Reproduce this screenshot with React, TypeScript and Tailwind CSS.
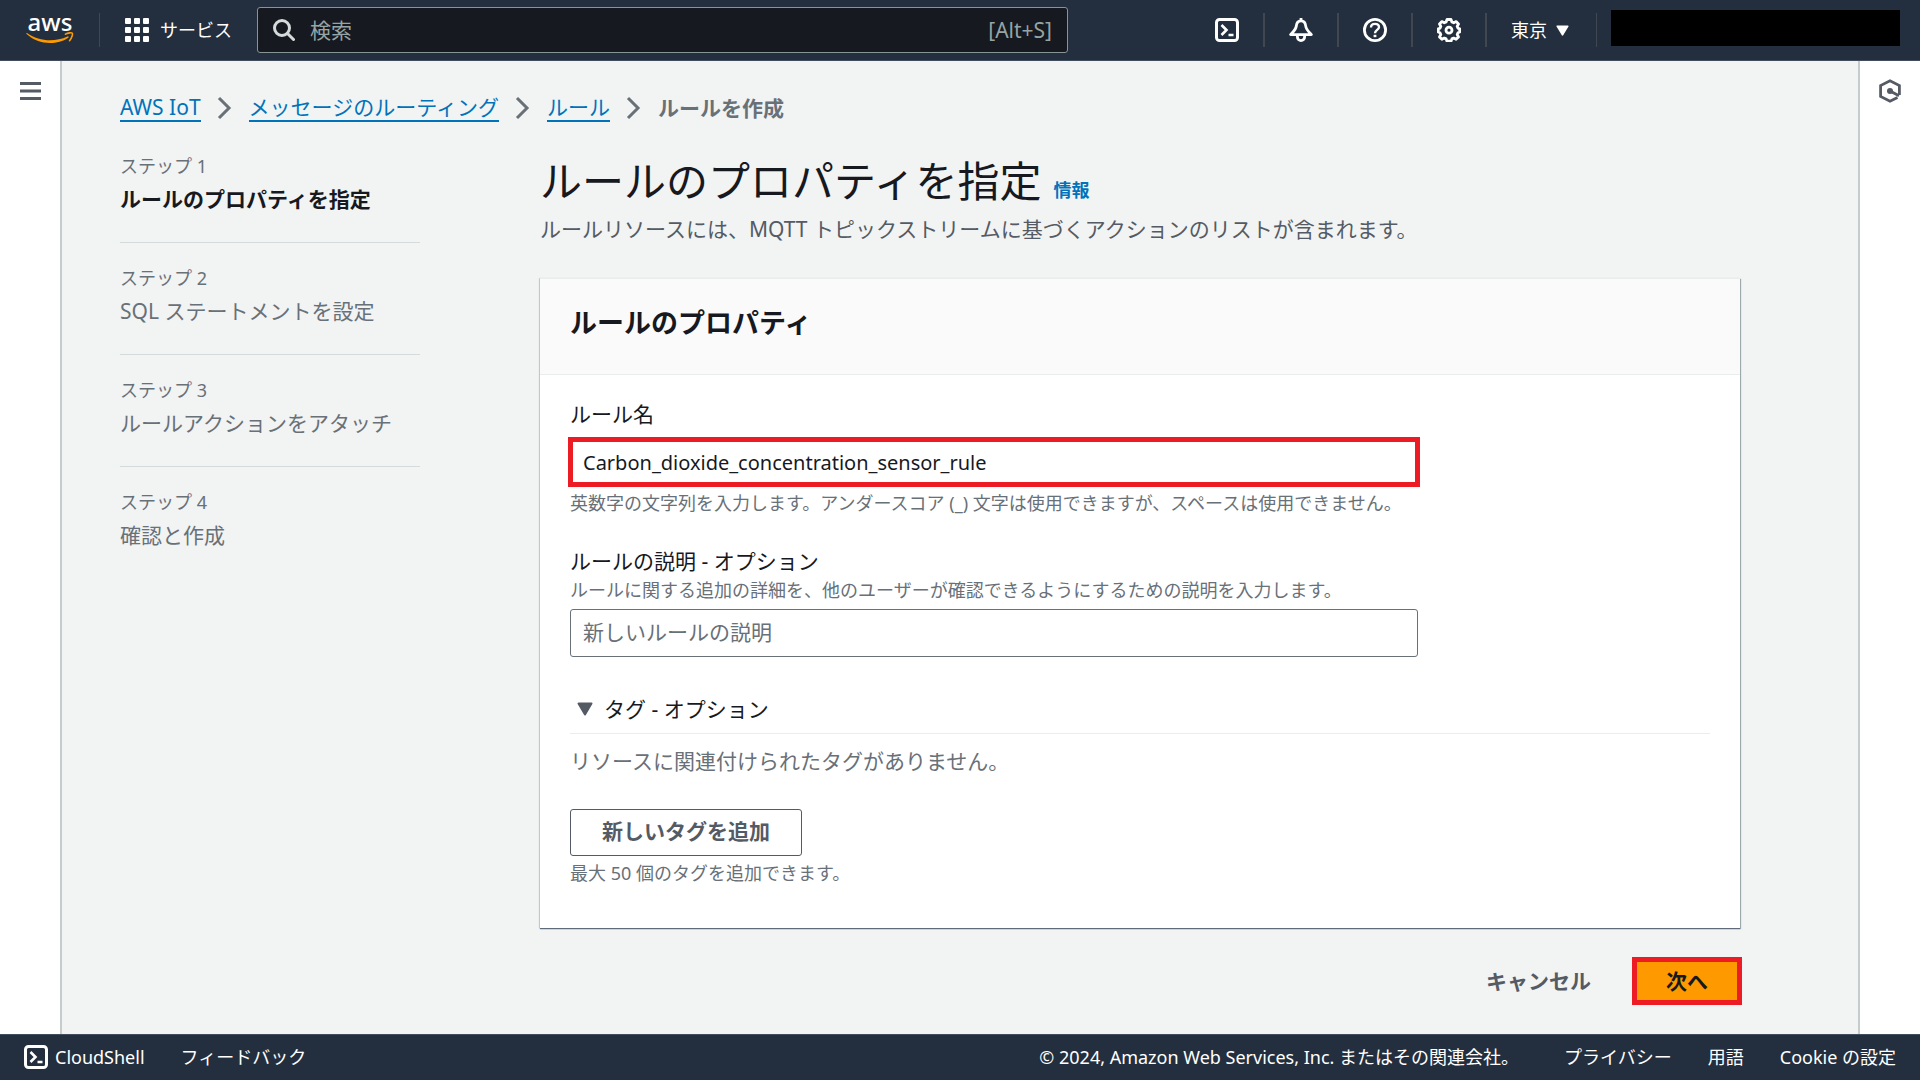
import { useState } from "react";
import type { ReactNode } from "react";

const STEPS = [
	{ label: "ステップ 1", title: "ルールのプロパティを指定" },
	{ label: "ステップ 2", title: "SQL ステートメントを設定" },
	{ label: "ステップ 3", title: "ルールアクションをアタッチ" },
	{ label: "ステップ 4", title: "確認と作成" },
];

const CRUMBS = ["AWS IoT", "メッセージのルーティング", "ルール"];

function AwsLogo() {
	return (
		<span className="flex w-12 flex-col items-center pb-1">
			<span className="text-[24px] leading-5 font-medium text-white">aws</span>
			<svg width="48" height="12" viewBox="0 0 48 12" fill="none" aria-hidden="true">
				<path d="M1 1C8 6 16 8.300 24 8.300C30 8.300 36 7 41.500 4.500C42.500 4 43.200 5.100 42.300 5.800C37 9.600 30.500 11 24 11C15.500 11 7 8 .6 2C.1 1.400 .4.700 1 1Z" fill="#ff9900" />
				<path d="M39.500 2.200C41.800.700 45.800.500 46.300 1.200C46.800 2 46 6.300 43.600 8.600" stroke="#ff9900" strokeWidth="1.600" strokeLinecap="round" />
			</svg>
		</span>
	);
}

function GridIcon() {
	return (
		<svg width="24" height="24" viewBox="0 0 24 24" fill="currentColor" aria-hidden="true">
			{[0, 9, 18].map((y) => [0, 9, 18].map((x) => <rect key={`${x}-${y}`} x={x} y={y} width="6" height="6" rx="1" />))}
		</svg>
	);
}

function ShellIcon() {
	return (
		<svg width="24" height="24" viewBox="0 0 24 24" fill="none" stroke="currentColor" strokeWidth="3" aria-hidden="true">
			<rect x="1.500" y="1.500" width="21" height="21" rx="3" />
			<path d="M6.500 7l5 5-5 5M13.500 17h5" strokeWidth="2.600" />
		</svg>
	);
}

function BellIcon() {
	return (
		<svg width="24" height="24" viewBox="0 0 24 24" fill="none" stroke="currentColor" strokeWidth="2.800" strokeLinejoin="round" aria-hidden="true">
			<path d="M12 2.800C9 2.800 7.600 5 7.300 8C7 11.500 4.500 13.500 1.600 16.600H22.400C19.500 13.500 17 11.500 16.700 8C16.400 5 15 2.800 12 2.800Z" />
			<path d="M12 0v3M8.400 17v2a3.600 3.600 0 0 0 7.200 0v-2" />
		</svg>
	);
}

function HelpIcon() {
	return (
		<svg width="24" height="24" viewBox="0 0 24 24" fill="none" stroke="currentColor" strokeWidth="2.800" aria-hidden="true">
			<circle cx="12" cy="12" r="10.600" />
			<path d="M8 9.400C8 7.200 9.700 5.900 12 5.900s4 1.300 4 3.300c0 2.600-4 2.900-4 6" strokeWidth="2.400" />
			<path d="M12 16.800v2.400" strokeWidth="2.800" />
		</svg>
	);
}

function GearIcon() {
	return (
		<svg width="24" height="24" viewBox="0 0 24 24" fill="none" stroke="currentColor" strokeWidth="2.800" strokeLinejoin="round" aria-hidden="true">
			<path d="M10 1.500h4l.9 2.500 1.800.8 2.400-1.200 2.400 2.400-1.300 2.400.8 1.800 1.700.7v3l-1.700.8-.8 1.800 1.300 2.400-2.400 2.400-2.400-1.200-1.800.8-.9 2.300h-4l-.9-2.300-1.800-.8-2.400 1.200-2.400-2.400 1.300-2.400-.8-1.800-1.700-.8v-3l1.700-.7.8-1.800L2.500 6l2.400-2.400 2.400 1.200L9.100 4z" />
			<circle cx="12" cy="12.200" r="3" />
		</svg>
	);
}

function HexIcon() {
	return (
		<svg width="24" height="24" viewBox="0 0 24 24" fill="none" stroke="currentColor" strokeWidth="2.800" aria-hidden="true">
			<path d="M19.500 18.500L12 22.300 2.600 17.500V6.500L12 1.700l9.400 4.800V16" />
			<path d="M12 12l9 4.800" />
			<circle cx="12" cy="12" r="3" fill="currentColor" stroke="none" />
		</svg>
	);
}

function CaretDown({ className }: { className: string }) {
	return (
		<svg viewBox="0 0 16 14" preserveAspectRatio="none" className={className} fill="currentColor" stroke="currentColor" strokeWidth="2" strokeLinejoin="round" aria-hidden="true">
			<path d="M1.500 1.500h13L8 12.500z" />
		</svg>
	);
}

function HeaderButton({ label, children }: { label: string; children: ReactNode }) {
	return (
		<button type="button" aria-label={label} className="flex h-[34px] w-[74px] items-center justify-center border-r-2 border-[#414750]">
			{children}
		</button>
	);
}

function TopBar() {
	return (
		<header className="flex h-[61px] shrink-0 items-center border-b border-[#414d5c] bg-[#232f3e] text-white">
			<a href="#" aria-label="AWS" className="ml-[26px]">
				<AwsLogo />
			</a>
			<div className="ml-[25px] h-[34px] w-px bg-[#414750]" />
			<button type="button" className="ml-[25px] flex items-center gap-[11px] text-[18px] leading-6">
				<GridIcon />
				サービス
			</button>
			<label className="ml-[25px] flex h-[46px] max-w-[811px] flex-1 items-center rounded-[3px] border border-[#879596] bg-[#16191f] px-[15px]">
				<svg width="22" height="22" viewBox="0 0 22 22" fill="none" stroke="#d5dbdb" strokeWidth="3" aria-hidden="true">
					<circle cx="9" cy="9" r="7.500" />
					<path d="M14.500 14.500l6 6" strokeLinecap="round" />
				</svg>
				<input type="search" aria-label="検索" placeholder="検索" className="ml-[15px] min-w-0 flex-1 bg-transparent text-[21px] leading-7 outline-none placeholder:text-[#95a5a6]" />
				<span className="text-[21px] leading-7 text-[#95a5a6]">[Alt+S]</span>
			</label>
			<nav className="ml-auto flex items-center">
				<HeaderButton label="CloudShell"><ShellIcon /></HeaderButton>
				<HeaderButton label="通知"><BellIcon /></HeaderButton>
				<HeaderButton label="ヘルプ"><HelpIcon /></HeaderButton>
				<HeaderButton label="設定"><GearIcon /></HeaderButton>
				<button type="button" className="flex h-[34px] items-center gap-[9px] border-r border-[#414750] pr-[27px] pl-6 text-[18px] leading-6">
					東京
					<CaretDown className="h-[11px] w-[13px]" />
				</button>
				<div className="mr-5 mb-[5px] ml-[14px] h-9 w-[289px] bg-black" />
			</nav>
		</header>
	);
}

function Breadcrumbs() {
	return (
		<nav aria-label="パンくずリスト" className="flex items-center text-[21px] leading-[30px]">
			{CRUMBS.map((crumb) => (
				<div key={crumb} className="flex items-center">
					<a href="#" className="border-b-2 border-[#0073bb] leading-[26px] text-[#0073bb]">{crumb}</a>
					<svg width="16" height="24" viewBox="0 0 16 24" fill="none" stroke="#687078" strokeWidth="3" className="mx-4" aria-hidden="true">
						<path d="M2 2l10 10L2 22" />
					</svg>
				</div>
			))}
			<span className="font-bold text-[#687078]">ルールを作成</span>
		</nav>
	);
}

function StepList() {
	return (
		<ol className="w-[300px] shrink-0 divide-y divide-[#d5dbdb]">
			{STEPS.map((step, index) => (
				<li key={step.label} className="pt-[23px] pb-[27px] first:pt-0">
					<p className="text-[18px] leading-6 text-[#687078]">{step.label}</p>
					<p className={index === 0 ? "pt-[5px] text-[21px] leading-8 font-bold text-[#16191f]" : "pt-[5px] text-[21px] leading-8 text-[#687078]"}>
						{step.title}
					</p>
				</li>
			))}
		</ol>
	);
}

function RuleProperties() {
	const [name, setName] = useState("Carbon_dioxide_concentration_sensor_rule");
	const [description, setDescription] = useState("");

	return (
		<section className="mt-[33px] border-t border-[#eaeded] bg-white shadow-[0_1px_1px_#5f6b7a,1px_1px_1px_#aab7b8,-1px_0_1px_#d5dbdb]">
			<div className="border-b border-[#eaeded] bg-[#fafafa] px-[30px] pt-[23px] pb-[30px]">
				<h2 className="text-[27px] leading-[42px] font-bold">ルールのプロパティ</h2>
			</div>
			<div className="px-[30px] pt-[23px] pb-[43px]">
				<div className="max-w-[848px]">
					<label htmlFor="rule-name" className="block text-[21px] leading-[33px]">ルール名</label>
					<input
						id="rule-name"
						value={name}
						onChange={(e) => setName(e.target.value)}
						className="mt-2 block h-[46px] w-full px-[13px] text-[20px] leading-7 outline-[5px] -outline-offset-3 outline-[#ed1c24]"
					/>
					<p className="pt-[6px] text-[18px] leading-6 whitespace-nowrap text-[#687078]">
						英数字の文字列を入力します。アンダースコア (_) 文字は使用できますが、スペースは使用できません。
					</p>
				</div>
				<div className="mt-[30px] max-w-[848px]">
					<label htmlFor="rule-description" className="block text-[21px] leading-[33px]">ルールの説明 - オプション</label>
					<p className="text-[18px] leading-6 text-[#687078]">
						ルールに関する追加の詳細を、他のユーザーが確認できるようにするための説明を入力します。
					</p>
					<input
						id="rule-description"
						value={description}
						onChange={(e) => setDescription(e.target.value)}
						placeholder="新しいルールの説明"
						className="mt-[7px] block h-12 w-full rounded-[3px] border border-[#687078] px-3 pb-[2px] text-[21px] leading-7 placeholder:text-[#687078]"
					/>
				</div>
				<div className="mt-9 border-b border-[#eaeded] pb-2">
					<button type="button" className="flex items-center gap-[11px] pl-[7px] text-[21px] leading-8">
						<CaretDown className="h-[14px] w-4 text-[#545b64]" />
						タグ - オプション
					</button>
				</div>
				<p className="pt-[11px] text-[21px] leading-8 text-[#687078]">リソースに関連付けられたタグがありません。</p>
				<button type="button" className="mt-8 flex h-[47px] items-center rounded-[3px] border border-[#545b64] bg-white px-[31px] pb-1 text-[21px] leading-7 font-bold text-[#545b64]">
					新しいタグを追加
				</button>
				<p className="pt-[5px] text-[18px] leading-6 text-[#687078]">最大 50 個のタグを追加できます。</p>
			</div>
		</section>
	);
}

function Footer() {
	return (
		<footer className="flex h-[46px] shrink-0 items-center border-t border-[#414d5c] bg-[#232f3e] px-6 pb-[2px] text-[18px] leading-6 text-white">
			<button type="button" className="flex items-center gap-[7px]">
				<ShellIcon />
				CloudShell
			</button>
			<a href="#" className="ml-9">フィードバック</a>
			<p className="ml-auto">© 2024, Amazon Web Services, Inc. またはその関連会社。</p>
			<a href="#" className="ml-[45px]">プライバシー</a>
			<a href="#" className="ml-9">用語</a>
			<a href="#" className="ml-9">Cookie の設定</a>
		</footer>
	);
}

export default function App() {
	return (
		<div className="flex min-h-screen flex-col bg-[#f2f3f3] font-['Noto_Sans','Noto_Sans_CJK_JP',sans-serif] text-[#16191f]" lang="ja">
			<TopBar />
			<div className="flex flex-1">
				<aside className="flex w-[62px] shrink-0 items-start justify-center border-r-2 border-[#c6cccc] bg-white pt-[21px]">
					<button type="button" aria-label="メニュー" className="text-[#545b64]">
						<svg width="21" height="18" viewBox="0 0 21 18" fill="currentColor" aria-hidden="true">
							<path d="M0 0h21v3H0zM0 7.500h21v3H0zM0 15h21v3H0z" />
						</svg>
					</button>
				</aside>
				<main className="min-w-0 flex-1 pt-8 pr-[118px] pl-[58px]">
					<Breadcrumbs />
					<div className="mt-[31px] flex gap-[120px]">
						<StepList />
						<div className="min-w-0 flex-1">
							<div className="flex items-baseline gap-3">
								<h1 className="text-[42px] leading-[54px]">ルールのプロパティを指定</h1>
								<a href="#" className="text-[18px] leading-6 font-bold text-[#0073bb]">情報</a>
							</div>
							<p className="pt-[5px] text-[21px] leading-8 text-[#545b64]">
								ルールリソースには、MQTT トピックストリームに基づくアクションのリストが含まれます。
							</p>
							<RuleProperties />
							<div className="mt-[31px] flex items-center justify-end gap-[43px] pb-[28px]">
								<button type="button" className="text-[21px] leading-7 font-bold text-[#545b64]">キャンセル</button>
								<button type="button" className="h-11 bg-[#ff9900] px-8 text-[21px] leading-7 font-bold outline-[5px] -outline-offset-3 outline-[#ed1c24]">
									次へ
								</button>
							</div>
						</div>
					</div>
				</main>
				<aside className="flex w-[62px] shrink-0 items-start justify-center border-l-2 border-[#c6cccc] bg-white pt-[18px]">
					<button type="button" aria-label="ヘルプパネル" className="text-[#545b64]">
						<HexIcon />
					</button>
				</aside>
			</div>
			<Footer />
		</div>
	);
}
